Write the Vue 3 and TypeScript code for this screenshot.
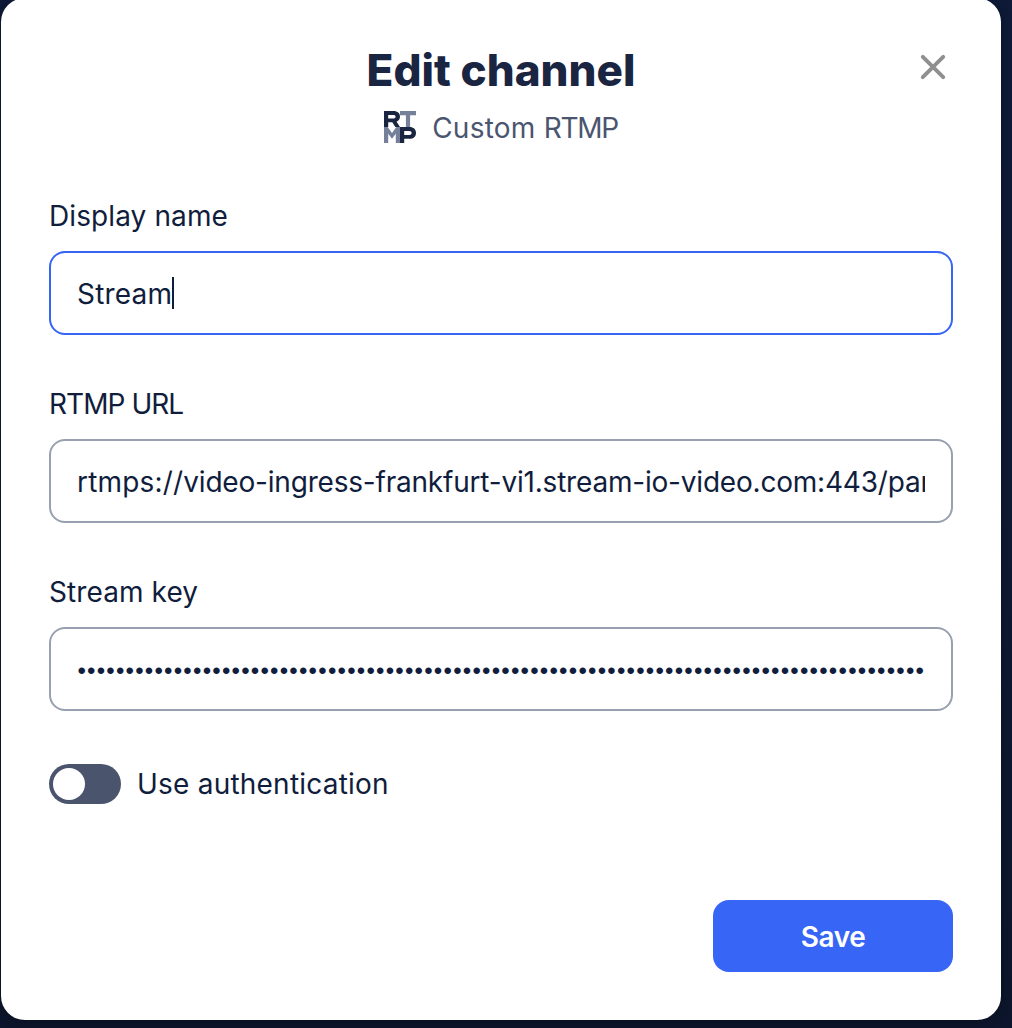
<script setup lang="ts">
import { ref } from 'vue'

const displayName = ref('Stream')
const scheme = ref('rtmps://')
const address = ref('video-ingress-frankfurt-vi1.stream-io-video.com:443/par')
const maskedKey = '•'.repeat(88)
const useAuth = ref(false)
</script>

<template>
  <main class="backdrop">
    <section class="dialog" role="dialog" aria-labelledby="title">
      <header class="header">
        <h1 id="title" class="title">Edit channel</h1>
        <div class="platform">
          <svg class="logo" viewBox="0 0 32 32" aria-hidden="true">
            <path fill="#75809a" d="M16 0h16v4.200h-5.900V16h-4.200V4.200H16zM0 16h3.600l4.400 6 4.400-6H16v16h-4.200v-9.300L8 27.700l-3.800-5V32H0z" />
            <path fill="#1a2542" fill-rule="evenodd" d="M0 0h9.500C13.500 0 16 2.200 16 5.600c0 2.500-1.300 4.300-3.400 5.100L16 16h-4.700l-3-4.800H4.200V16H0zM4.200 3.900v3.600h5c1.500 0 2.400-.6 2.400-1.800s-.9-1.800-2.400-1.800z" />
            <path fill="#1a2542" fill-rule="evenodd" d="M16 16h9.500c4 0 6.500 2.300 6.500 5.900s-2.500 5.900-6.500 5.900h-5.300V32H16zM20.200 20v3.900h5c1.500 0 2.400-.7 2.400-1.950S26.700 20 25.200 20z" />
          </svg>
          <span class="platform-name">Custom <span class="caps">RTMP</span></span>
        </div>
        <button class="close" aria-label="Close">
          <svg viewBox="0 0 26 26" fill="none" stroke="#8f8f8f" stroke-width="3.900" stroke-linecap="round">
            <path d="M2.800 2.800 23.200 23.200M23.200 2.800 2.800 23.200" />
          </svg>
        </button>
      </header>

      <div class="field">
        <span class="label">Display name</span>
        <div class="control focused">
          <span class="value v-name">{{ displayName }}</span><i class="caret"></i>
        </div>
      </div>
      <div class="field">
        <span class="label l-url">RTMP URL</span>
        <div class="control"><span class="value v-url"><span class="scheme">{{ scheme }}</span>{{ address }}</span></div>
      </div>
      <div class="field">
        <span class="label">Stream key</span>
        <div class="control"><span class="value v-key">{{ maskedKey }}</span></div>
      </div>

      <div class="auth">
        <button class="switch" role="switch" :aria-checked="useAuth" @click="useAuth = !useAuth">
          <span class="knob" :class="{ on: useAuth }"></span>
        </button>
        <span class="auth-label">Use authentication</span>
      </div>

      <footer class="footer">
        <button class="save">Save</button>
      </footer>
    </section>
  </main>
</template>

<style>
body {
  margin: 0;
  overflow: hidden;
}
</style>

<style scoped>
.backdrop {
  box-sizing: border-box;
  width: 1012px;
  height: 1028px;
  overflow: hidden;
  padding-left: 1px;
  background: linear-gradient(180deg, #0e1a38 0%, #0f1a33 50%, #0c152b 100%);
  font-family: Inter, "Liberation Sans", sans-serif;
  color: #101d3c;
}
.dialog {
  box-sizing: border-box;
  width: 1000px;
  height: 1022px;
  margin-top: -2px;
  padding: 46px 48px 48px;
  border-radius: 24px;
  background: #fff;
  box-shadow: 0 0 12px rgba(0, 0, 0, 0.3);
}
.header {
  position: relative;
  display: flex;
  flex-direction: column;
  align-items: center;
  height: 151px;
}
.title {
  margin: 0;
  font-size: 44px;
  line-height: 52px;
  font-weight: 800;
  letter-spacing: 0.02px;
  color: #1a2542;
}
.platform {
  display: flex;
  align-items: center;
  gap: 16px;
  height: 36px;
  margin-top: 15px;
}
.logo {
  width: 32px;
  height: 32px;
  margin-top: -4px;
}
.platform-name {
  margin-top: -2px;
  font-size: 28px;
  line-height: 36px;
  letter-spacing: 0.25px;
  color: #4b556f;
}
.caps {
  letter-spacing: -1.3px;
}
.close {
  position: absolute;
  top: 10px;
  right: 7px;
  width: 26px;
  height: 26px;
  padding: 0;
  border: 0;
  background: none;
}
.close svg {
  display: block;
}
.field {
  display: flex;
  flex-direction: column;
  height: 188px;
}
.label {
  height: 56px;
  font-size: 28px;
  line-height: 42px;
  letter-spacing: 0.1px;
}
.l-url {
  letter-spacing: -0.95px;
}
.control {
  box-sizing: border-box;
  display: flex;
  align-items: center;
  height: 84px;
  padding: 0 26px;
  border: 2px solid #99a1b0;
  border-radius: 16px;
}
.control.focused {
  border-color: #3765f6;
}
.value {
  overflow: hidden;
  padding-top: 2px;
  white-space: nowrap;
  font-size: 28px;
  line-height: 40px;
}
.v-name {
  letter-spacing: 0.18px;
}
.v-url {
  letter-spacing: -0.2px;
}
.scheme {
  letter-spacing: 0.18px;
}
.v-key {
  padding: 4px 0 0 0.4px;
  font-family: "Liberation Sans", sans-serif;
  font-size: 24px;
  letter-spacing: 1.232px;
}
.caret {
  width: 2px;
  height: 32px;
  background: #101d3c;
}
.auth {
  display: flex;
  align-items: center;
  gap: 16px;
  height: 40px;
  margin-top: 5px;
}
.switch {
  width: 72px;
  height: 40px;
  padding: 4px;
  border: 0;
  border-radius: 20px;
  background: #4a546d;
}
.knob {
  display: block;
  width: 32px;
  height: 32px;
  border-radius: 50%;
  background: #fff;
}
.knob.on {
  margin-left: 32px;
}
.auth-label {
  font-size: 28px;
  line-height: 40px;
  letter-spacing: 0.22px;
}
.footer {
  display: flex;
  justify-content: flex-end;
  margin-top: 96px;
}
.save {
  width: 240px;
  height: 72px;
  padding: 2px 0 0;
  border: 0;
  border-radius: 16px;
  background: #3765f6;
  color: #fff;
  font: 600 28px/40px Inter, sans-serif;
  letter-spacing: -0.4px;
}
</style>
